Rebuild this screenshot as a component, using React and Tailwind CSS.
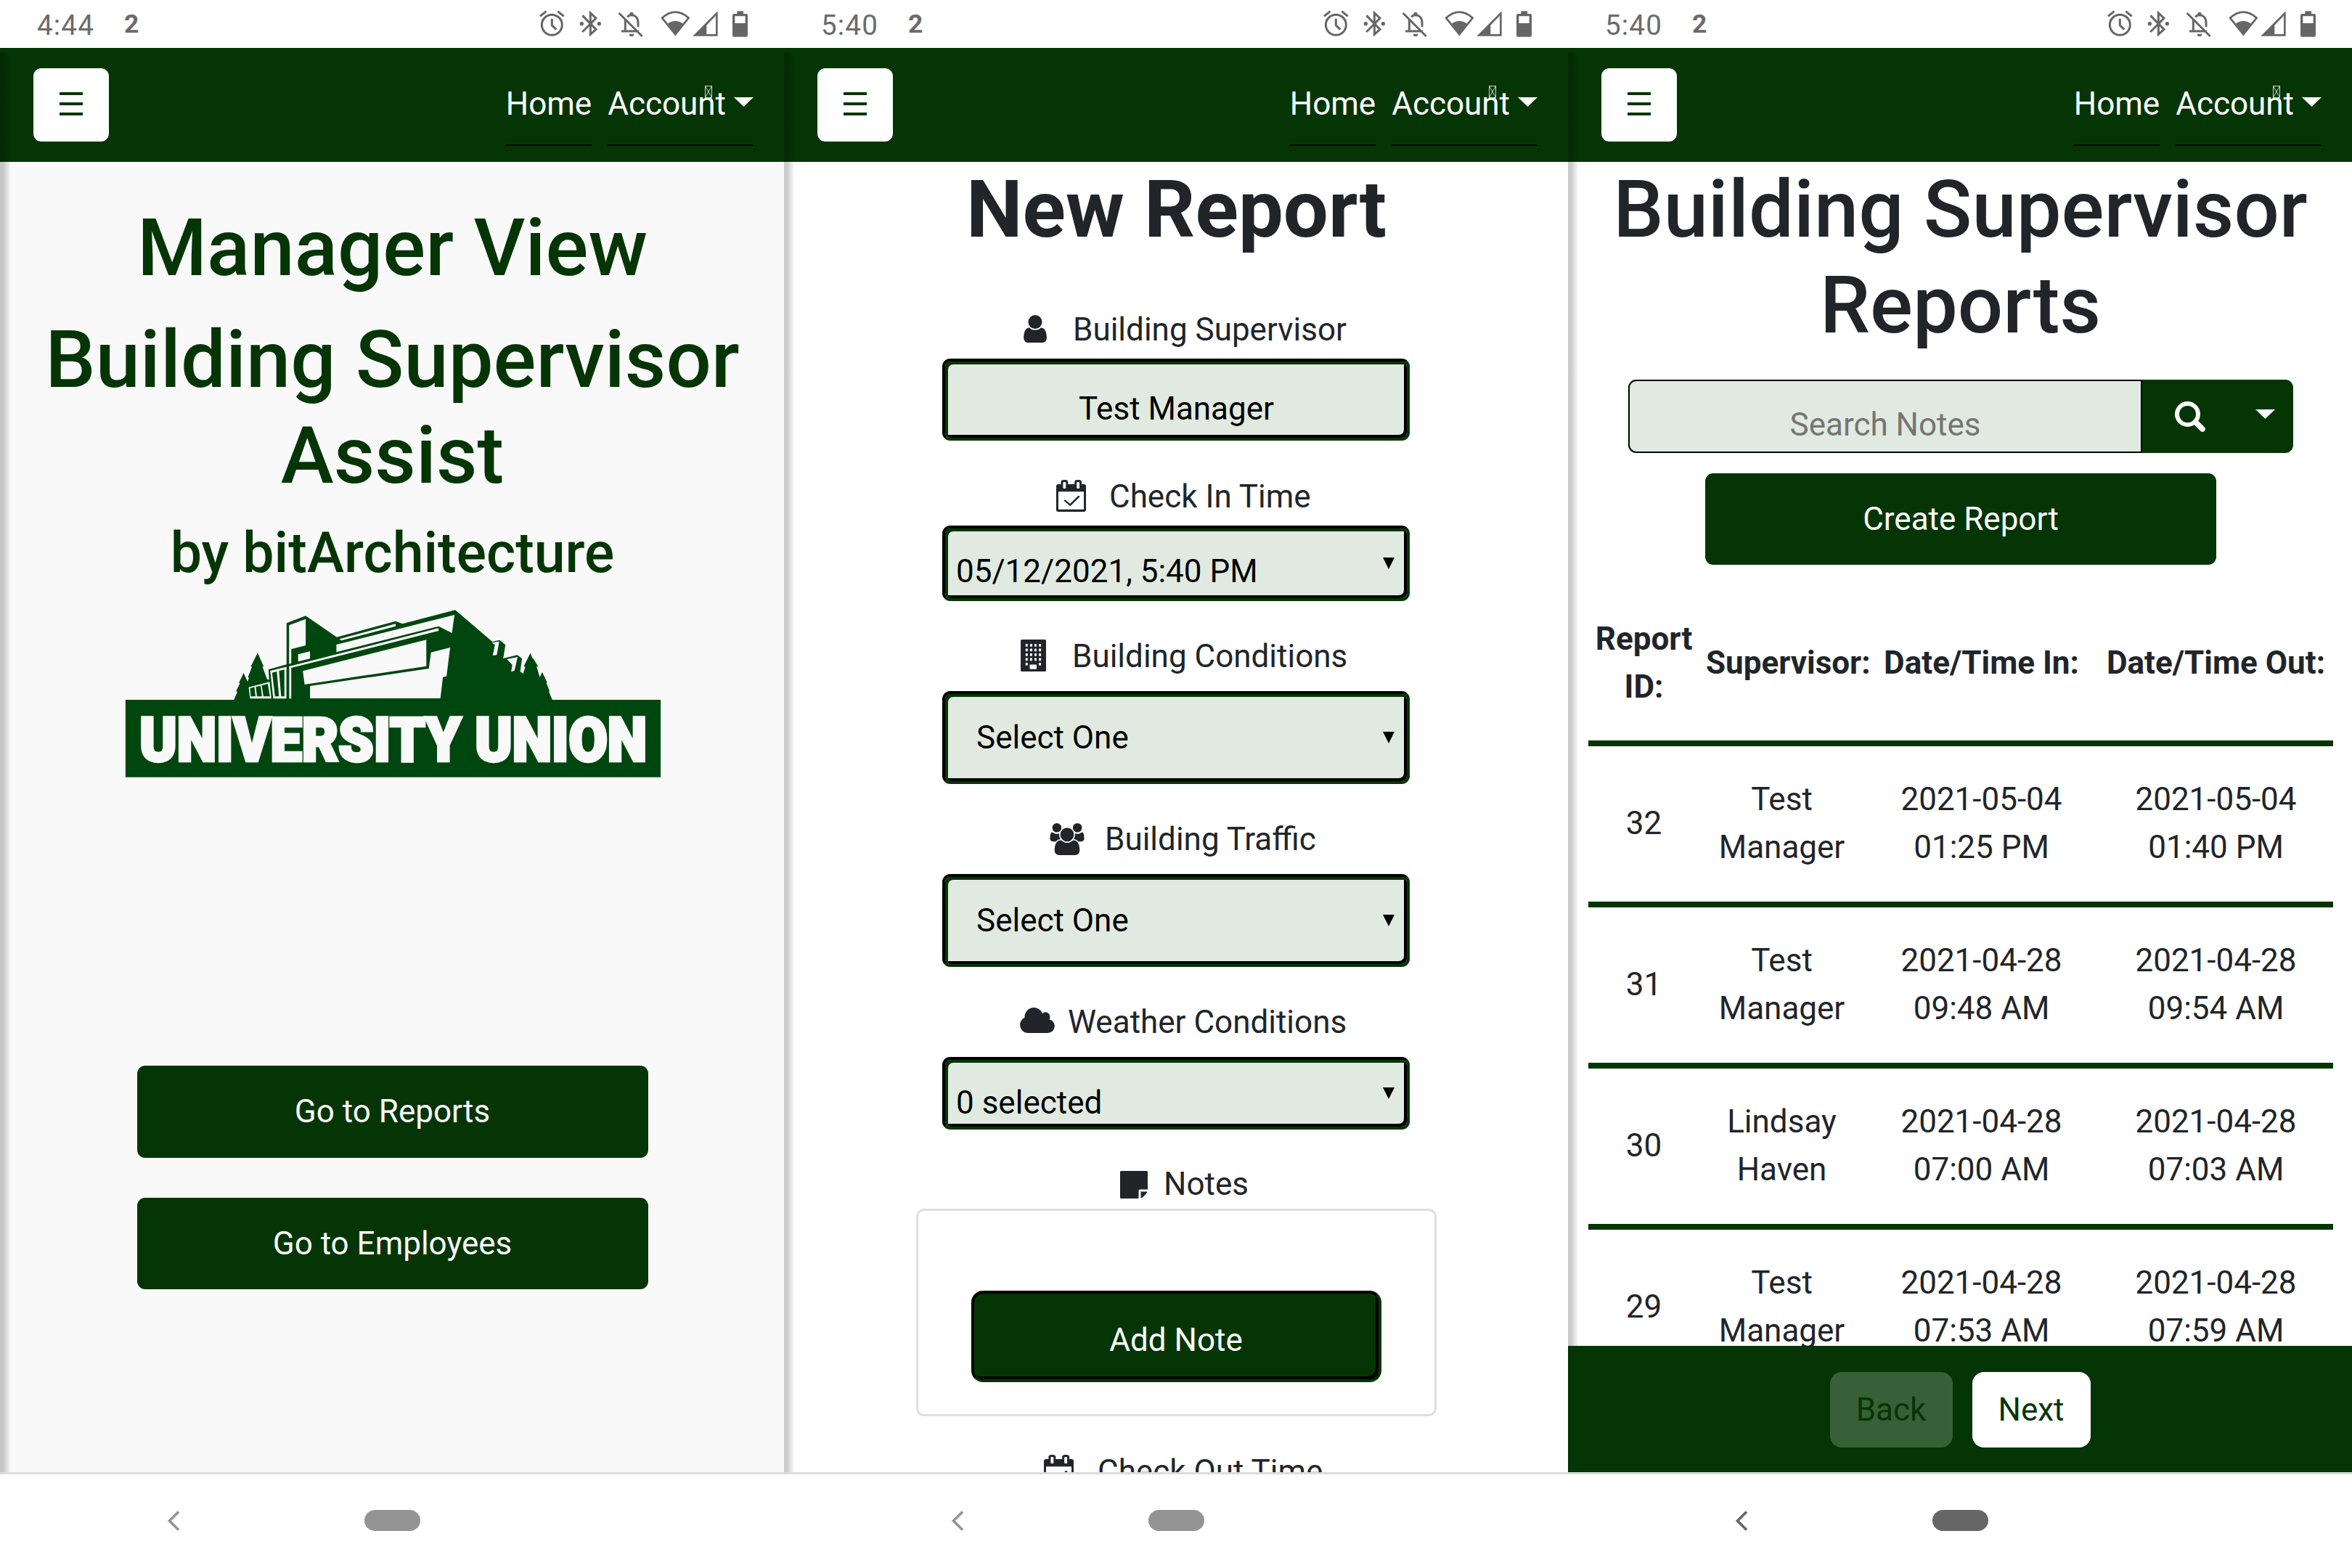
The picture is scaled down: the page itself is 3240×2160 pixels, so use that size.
import React from "react";

const StatusIcons = () => (
  <div className="flex text-[#666]">
    <svg className="h-[66px] w-[50px]" viewBox="30 0 150 198" fill="none" stroke="currentColor" strokeWidth="9">
      <circle cx="91" cy="103" r="42" />
      <path d="M91 77v28l18 17M42 67l25-20M115 47l25 20" />
    </svg>
    <svg className="h-[66px] w-[50px]" viewBox="180 0 150 198" fill="none" stroke="currentColor" strokeWidth="9">
      <path d="M217 64l56 57-23 21V54l23 21-56 57" />
      <circle cx="214" cy="98" r="8" fill="currentColor" stroke="none" />
      <circle cx="286" cy="98" r="8" fill="currentColor" stroke="none" />
    </svg>
    <svg className="h-[66px] w-[60px]" viewBox="330 0 180 198" fill="none" stroke="currentColor" strokeWidth="9">
      <path d="M368 54l96 96M378 129h72M394 82v46M402 70c10-10 26-10 36-1 6 6 9 14 9 24v18" />
      <path d="M412 64v-6a8 8 0 0 1 16 0v6zM410 140h20a10 10 0 0 1-20 0z" fill="currentColor" stroke="none" />
    </svg>
    <svg className="h-[66px] w-[52px]" viewBox="510 0 156 198">
      <path d="M546 74q55-48 110 0l-55 68z" fill="none" stroke="currentColor" strokeWidth="8" />
      <path d="M570 97q31-22 62 0l-31 50z" fill="currentColor" />
    </svg>
    <svg className="h-[66px] w-[48px]" viewBox="666 0 144 198" fill="currentColor">
      <path fillRule="evenodd" d="M673 149.500L776 46v103.500zM768 65l-38 39v37h38z" />
    </svg>
    <svg className="h-[66px] w-[40px]" viewBox="810 0 120 198" fill="currentColor">
      <path fillRule="evenodd" d="M856 46h26v11h12q6 0 6 6v83q0 6-6 6h-51q-6 0-6-6V63q0-6 6-6h13zM847 67v29h43V67z" />
    </svg>
  </div>
);

function StatusBar({ time }) {
  return (
    <div className="flex h-[66px] shrink-0 items-center bg-white pl-[51px] pr-[40px] text-[#6b6b6b]">
      <div className="w-[120px] pt-[3px] text-[38.500px] leading-[44px] tracking-[1.2px]">{time}</div>
      <div className="flex-1 pb-[1px] text-[35.500px] font-bold leading-[44px]">2</div>
      <StatusIcons />
    </div>
  );
}

function Header() {
  return (
    <div className="flex h-[157px] shrink-0 items-start justify-between bg-[#053505] pl-[46px] pr-[42px] pt-[22px] text-[44px] leading-[66px] text-white">
      <button className="mt-[6px] flex h-[101px] w-[104px] items-center justify-center rounded-[11px] bg-white pb-[3px]">
        <svg className="h-[32px] w-[34px]" viewBox="0 0 34 32" fill="#053505">
          <path d="M1 0h32v4H1zM1 14h32v4H1zM1 28h32v4H1z" />
        </svg>
      </button>
      <div className="flex gap-[22px]">
        <div className="h-[113px] border-b-[2px] border-black pt-[22px]">Home</div>
        <div className="relative flex h-[113px] border-b-[2px] border-black pt-[22px]">
          Account
          <svg className="ml-[11px] mt-[24px] h-[13px] w-[27px]" viewBox="0 0 27 13" fill="white">
            <path d="M0 0h27L13.500 13z" />
          </svg>
          <svg className="absolute left-[134px] top-[30px] h-[17px] w-[10px]" viewBox="0 0 10 17" fill="none" stroke="#cfd8cf" strokeWidth="1">
            <path d="M.5.5h9v16h-9zM.5.5l9 16M9.500.5l-9 16" />
          </svg>
        </div>
      </div>
    </div>
  );
}

function SystemNav({ dark }) {
  return (
    <div className={`flex h-[132px] shrink-0 items-start border-t-[3px] bg-white ${dark ? "border-[#dadada] text-[#666]" : "border-[#dcdce0] text-[#949494]"}`}>
      <svg className="ml-[229px] mt-[50px] h-[28px] w-[20px]" viewBox="0 0 20 28" fill="none" stroke="currentColor" strokeWidth="3.600">
        <path d="M17 1.500L4.500 14 17 26.500" />
      </svg>
      <div className="ml-[253px] mt-[49px] h-[29px] w-[77px] rounded-full bg-current" />
    </div>
  );
}

function Phone({ time, dark, bg, footer, children }) {
  return (
    <div className="flex h-[2160px] w-[1080px] flex-col overflow-hidden">
      <StatusBar time={time} />
      <div className="relative flex min-h-0 flex-1 flex-col">
        <Header />
        <div className={`min-h-0 flex-1 overflow-hidden ${bg}`}>{children}</div>
        <div className="absolute bottom-0 left-0 top-[6px] w-[15px] bg-linear-to-r from-black/20 from-30% to-black/0" />
        {footer}
      </div>
      <SystemNav dark={dark} />
    </div>
  );
}

function UnionLogo() {
  return (
    <svg className="mx-auto h-[270px] w-[780px]" viewBox="0 0 1568 810" preserveAspectRatio="none" fill="#00460f">
      <rect x="44" y="435" width="1482" height="320" />
      <path d="M344 436L354 402 350 400 361 367 358 365 371 324 382 360 386 344 383 342 394 299 391 297 410 241 427 299 423 297 436 350 442 352V436z" />
      <path d="M440 310L490 289V118L543 88 629 176 792 110 811 121 957 64 1060 195 1080 188 1096 208 1090 264 1129 250 1142 265 1137 318 1145 328 1151 299 1147 297 1165 242 1182 299 1187 324 1190 346 1198 320 1212 365 1209 363 1219 402 1216 400 1226 436H384V381L442 358z" />
      <path d="M1172 260L1187 299 1182 297 1192 345 1180 350z" />
      <g fill="#f9f9f9">
        <path d="M497 127L543 101V210L503 226V284L497 287z" />
        <path d="M522 247L555 235V265L522 277z" />
        <path d="M636 184L792 121V131L642 190z" />
        <path d="M628 207L955 84 948 159 911 131 628 238z" />
        <path d="M445 316L490 299V430H453z" />
        <path d="M497 297L911 139V150L503 303V430H497z" />
        <path d="M445 316L497 297 503 295V303L445 322z" />
        <path d="M385 383L443 361 448 430H389z" />
        <path d="M535 316L877 187V296L540 372z" />
        <path d="M555 378L884 306 890 239 943 219 933 338 923 341 916 429H555z" />
        <path d="M1058 199L1079 194 1072 250 1061 252 1067 208z" />
        <path d="M1100 267L1130 258 1121 315 1112 319 1115 290z" />
      </g>
      <path d="M450 323L463 318 469 421H458zM469 316L484 310V421H475zM389 388L401 382 404 421H391zM405 381L418 377 422 421H408zM421 376L438 369 444 421H426z" />
      <path d="M490 285H497V430H490z" />
      <text
        x="83"
        y="688"
        textLength="1405"
        lengthAdjust="spacingAndGlyphs"
        fill="#f9f9f9"
        stroke="#f9f9f9"
        strokeWidth="13"
        fontFamily="Roboto"
        fontWeight="900"
        fontSize="251"
      >
        UNIVERSITY UNION
      </text>
    </svg>
  );
}

function ManagerView() {
  return (
    <div className="pl-[1px] pt-[53px] text-center font-medium text-[#053505]">
      <h1 className="text-[110px] leading-[132px]">Manager View</h1>
      <h1 className="mt-[22px] text-[110px] leading-[132px]">Building Supervisor<br />Assist</h1>
      <h3 className="mt-[22px] text-[77px] leading-[92px]">by bitArchitecture</h3>
      <div className="mt-[11px]"><UnionLogo /></div>
      <div className="mt-[379px] flex flex-col items-center gap-[55px] text-[44px] font-normal text-[#f9f9f9]">
        <button className="h-[127px] w-[704px] rounded-[11px] bg-[#053505] pb-[2px]">Go to Reports</button>
        <button className="h-[126px] w-[704px] rounded-[11px] bg-[#053505]">Go to Employees</button>
      </div>
    </div>
  );
}

const CalendarIcon = () => (
  <svg className="h-[44px] w-[41px]" viewBox="0 0 83 132" preserveAspectRatio="none">
    <path fillRule="evenodd" fill="currentColor" d="M6 18H77Q83 18 83 26V124Q83 132 77 132H6Q0 132 0 124V26Q0 18 6 18zM6 49V122H77V49z" />
    <rect x="13" y="0" width="20" height="42" rx="9" fill="currentColor" />
    <rect x="51" y="0" width="20" height="42" rx="9" fill="currentColor" />
    <rect x="19" y="9" width="8" height="27" rx="3" fill="white" />
    <rect x="57" y="9" width="8" height="27" rx="3" fill="white" />
    <path d="M23 84L39 104 64 67" fill="none" stroke="currentColor" strokeWidth="6" />
  </svg>
);

const UserIcon = () => (
  <svg className="h-[38px] w-[32px]" viewBox="256 128 1280 1536" fill="currentColor">
    <path d="M1536 1399q0 109-62.500 187t-150.500 78h-854q-88 0-150.500-78t-62.500-187q0-85 8.500-160.500t31.500-152 58.500-131 94-89 134.500-34.500q131 128 313 128t313-128q76 0 134.500 34.500t94 89 58.500 131 31.500 152 8.500 160.500zm-256-887q0 159-112.500 271.500t-271.500 112.500-271.500-112.500-112.500-271.500 112.500-271.500 271.500-112.500 271.500 112.500 112.500 271.500z" />
  </svg>
);

const UsersIcon = () => (
  <svg className="h-[44px] w-[48px]" viewBox="64 0 1920 1792" fill="currentColor">
    <path d="M657 896q-162 5-265 128h-134q-82 0-138-40.500t-56-118.500q0-353 124-353 6 0 43.500 21t97.500 42.500 119 21.500q67 0 133-23-5 37-5 66 0 139 81 256zm1071 637q0 120-73 189.500t-194 69.500h-874q-121 0-194-69.500t-73-189.500q0-53 3.500-103.500t14-109 26.500-108.500 43-97.500 62-81 85.500-53.500 111.500-20q10 0 43 21.500t73 48 107 48 135 21.500 135-21.500 107-48 73-48 43-21.500q61 0 111.500 20t85.500 53.500 62 81 43 97.500 26.500 108.500 14 109 3.500 103.500zm-1024-1277q0 106-75 181t-181 75-181-75-75-181 75-181 181-75 181 75 75 181zm704 384q0 159-112.500 271.500t-271.500 112.500-271.500-112.500-112.500-271.500 112.500-271.500 271.500-112.500 271.500 112.500 112.500 271.500zm576 225q0 78-56 118.500t-138 40.500h-134q-103-123-265-128 81-117 81-256 0-29-5-66 66 23 133 23 59 0 119-21.500t97.500-42.500 43.500-21q124 0 124 353zm-128-609q0 106-75 181t-181 75-181-75-75-181 75-181 181-75 181 75 75 181z" />
  </svg>
);

const BuildingIcon = () => {
  const windows = [];
  for (let r = 0; r < 5; r++)
    for (let c = 0; c < 4; c++)
      if (r < 4 || c === 0 || c === 3) windows.push(<rect key={`${r}-${c}`} x={6.8 + c * 6.1} y={6 + r * 6.5} width="3" height="3.800" rx=".8" />);
  return (
    <svg className="h-[44px] w-[35px]" viewBox="0 0 35 44" fill="white">
      <rect width="35" height="44" rx="1.500" fill="#212529" />
      {windows}
      <rect x="12.500" y="34.500" width="9.500" height="6.200" rx=".8" />
    </svg>
  );
};

const CloudIcon = () => (
  <svg className="h-[35px] w-[48px]" viewBox="64 128 1920 1408" fill="currentColor">
    <path d="M1984 1152q0 159-112.500 271.500t-271.500 112.500h-1088q-185 0-316.500-131.500t-131.500-316.500q0-132 71-241.500t187-163.500q-2-28-2-43 0-212 150-362t362-150q158 0 286.500 88t187.500 230q70-62 166-62 106 0 181 75t75 181q0 75-41 138 129 30 213 134.500t84 239.500z" />
  </svg>
);

const NoteIcon = () => (
  <svg className="h-[38px] w-[38px]" viewBox="0 0 38 38" fill="currentColor">
    <path d="M1.500 0h35Q38 0 38 1.500V25.500H27.500Q25.500 25.500 25.500 27.500V38H1.500Q0 38 0 36.500V1.500Q0 0 1.500 0zM28.500 28.500H37.500Q36.500 31 35 32.500L32.500 35Q31 36.500 28.500 37.500z" />
  </svg>
);

function FieldLabel({ icon, className, children }) {
  return <div className={`flex h-[66px] items-start whitespace-nowrap leading-[66px] ${className}`}>{icon}<span>{children}</span></div>;
}

const Arrow = ({ className }) => (
  <svg className={`h-[16px] w-[16px] ${className}`} viewBox="0 0 16 16"><path d="M0 0h16L8 16z" /></svg>
);

// Two-tone grooved edge: a 4px border outside, a 4px inset shadow inside with the tones swapped.
const groove = "border-[4px] border-t-black border-l-black border-r-[#053505] border-b-[#053505] shadow-[inset_4px_4px_0_#053505,inset_-4px_-4px_0_#000]";
const box = `mx-auto flex w-[644px] items-start rounded-[11px] bg-[#e1eae0] leading-[66px] text-black ${groove}`;

function NewReport() {
  return (
    <div className="text-[44px] text-[#212529]">
      <h1 className="pl-[1px] text-center text-[110px] font-bold leading-[132px]">New Report</h1>

      <FieldLabel className="mt-[66px] pl-[330px] [&>svg]:mt-[13px] [&>svg]:mr-[36px]" icon={<UserIcon />}>Building Supervisor</FieldLabel>
      <div className={`${box} mt-[7px] h-[113px] justify-center pl-[1px] pt-[32px]`}>Test Manager</div>

      <FieldLabel className="mt-[44px] pl-[375px] [&>svg]:mt-[10px] [&>svg]:mr-[32px]" icon={<CalendarIcon />}>Check In Time</FieldLabel>
      <div className={`${box} mt-[7px] h-[104px] justify-between pl-[15px] pr-[17px] pt-[26px]`}>05/12/2021, 5:40 PM<Arrow className="mt-[14px]" /></div>

      <FieldLabel className="mt-[43px] pl-[326px] [&>svg]:mt-[10px] [&>svg]:mr-[36px]" icon={<BuildingIcon />}>Building Conditions</FieldLabel>
      <div className={`${box} mt-[15px] h-[128px] justify-between pl-[43px] pr-[17px] pt-[27px]`}>Select One<Arrow className="mt-[25px]" /></div>

      <FieldLabel className="mt-[43px] pl-[366px] [&>svg]:mt-[11px] [&>svg]:mr-[28px]" icon={<UsersIcon />}>Building Traffic</FieldLabel>
      <div className={`${box} mt-[15px] h-[128px] justify-between pl-[43px] pr-[17px] pt-[27px]`}>Select One<Arrow className="mt-[25px]" /></div>

      <FieldLabel className="mt-[43px] pl-[325px] [&>svg]:mt-[13px] [&>svg]:mr-[18px]" icon={<CloudIcon />}>Weather Conditions</FieldLabel>
      <div className={`${box} mt-[15px] h-[100px] justify-between pl-[15px] pr-[17px] pt-[26px]`}>0 selected<Arrow className="mt-[12px]" /></div>

      <FieldLabel className="mt-[42px] pl-[463px] [&>svg]:mt-[15px] [&>svg]:mr-[22px]" icon={<NoteIcon />}>Notes</FieldLabel>
      <div className="mx-auto mt-[1px] flex h-[286px] w-[717px] items-start justify-center rounded-[11px] border-[3px] border-[#dfdfdf] pt-[110px]">
        <button className={`h-[126px] w-[565px] rounded-[16px] bg-[#053505] pt-[9px] text-white ${groove}`}>Add Note</button>
      </div>

      <FieldLabel className="mt-[43px] pl-[358px] [&>svg]:mt-[10px] [&>svg]:mr-[33px]" icon={<CalendarIcon />}>Check Out Time</FieldLabel>
    </div>
  );
}

const rows = [
  ["32", "Test", "Manager", "2021-05-04", "01:25 PM", "2021-05-04", "01:40 PM"],
  ["31", "Test", "Manager", "2021-04-28", "09:48 AM", "2021-04-28", "09:54 AM"],
  ["30", "Lindsay", "Haven", "2021-04-28", "07:00 AM", "2021-04-28", "07:03 AM"],
  ["29", "Test", "Manager", "2021-04-28", "07:53 AM", "2021-04-28", "07:59 AM"],
];

const columns = "ml-[28px] grid w-[1026px] grid-cols-[153px_227px_323px_323px] items-center text-center leading-[66px]";

function Reports() {
  return (
    <div className="text-[44px] text-[#212529]">
      <h1 className="pl-[1px] text-center text-[110px] font-medium leading-[132px]">Building Supervisor<br />Reports</h1>
      <div className="ml-[83px] mt-[36px] flex h-[101px] w-[916px]">
        <div className="w-[708px] shrink-0 rounded-l-[11px] border-[2px] border-black bg-[#e1eae0] pt-[27px] text-center leading-[66px] text-[#757575]">Search Notes</div>
        <div className="flex w-[208px] shrink-0 items-start rounded-r-[11px] bg-[#053505]">
          <svg className="ml-[45px] mt-[30px] h-[42px] w-[42px]" viewBox="0 0 42 42" fill="none" stroke="white">
            <circle cx="17.500" cy="17.500" r="14.500" strokeWidth="6" />
            <path d="M28.500 28.500L38 38" strokeWidth="7.500" strokeLinecap="round" />
          </svg>
          <svg className="ml-[69px] mt-[41px] h-[13px] w-[27px]" viewBox="0 0 27 13" fill="white"><path d="M0 0h27L13.500 13z" /></svg>
        </div>
      </div>
      <button className="ml-[189px] mt-[28px] flex h-[126px] w-[704px] items-center justify-center rounded-[11px] bg-[#053505] pb-[1px] text-white">Create Report</button>
      <div className={`${columns} mt-[69px] h-[181px] border-b-[8px] border-[#053505] pb-[42px] font-bold`}>
        <div>Report<br />ID:</div>
        <div className="whitespace-nowrap pl-[9px] text-left">Supervisor:</div>
        <div>Date/Time In:</div>
        <div>Date/Time Out:</div>
      </div>
      {rows.map((r) => (
        <div key={r[0]} className={`${columns} h-[222px] border-b-[8px] border-[#053505] pb-[2px]`}>
          <div>{r[0]}</div>
          <div>{r[1]}<br />{r[2]}</div>
          <div>{r[3]}<br />{r[4]}</div>
          <div>{r[5]}<br />{r[6]}</div>
        </div>
      ))}
    </div>
  );
}

const ReportsFooter = () => (
  <div className="relative flex h-[174px] shrink-0 items-start justify-center gap-[27px] bg-[#053505] pt-[36px] text-[44px] text-[#053505]">
    <button className="h-[104px] w-[169px] rounded-[16px] bg-[#376036]">Back</button>
    <button className="h-[104px] w-[163px] rounded-[16px] bg-white">Next</button>
  </div>
);

export default function App() {
  return (
    <div className="flex h-[2160px] w-[3240px] overflow-hidden bg-white font-[Roboto,sans-serif]">
      <Phone time="4:44" bg="bg-[#f9f9f9]"><ManagerView /></Phone>
      <Phone time="5:40" bg="bg-white"><NewReport /></Phone>
      <Phone time="5:40" bg="bg-white" dark footer={<ReportsFooter />}><Reports /></Phone>
    </div>
  );
}
